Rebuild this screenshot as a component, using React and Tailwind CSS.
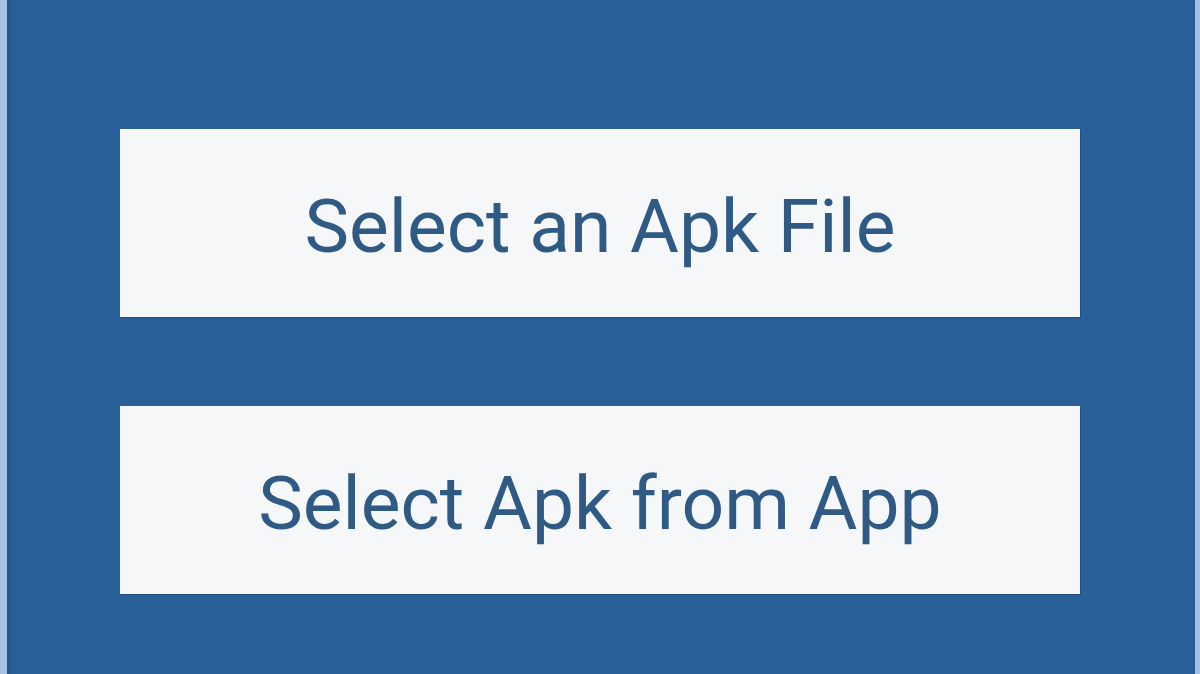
export default function App() {
  return (
    <div className="flex h-[674px] w-[1200px] overflow-hidden bg-[#2a6099]" style={{ fontFamily: "Roboto, 'Liberation Sans', sans-serif" }}>
      <div className="w-[7px] bg-[#a9c4e2]" />
      <div className="w-[4px] bg-[#23598f]" />
      <div className="flex flex-1 flex-col gap-[89px] pl-[109px] pr-[113px] pt-[129px]">
        <button className="h-[188px] w-full bg-[#f5f7f9] pt-[6px] text-[75px] leading-none text-[#2f5a83] shadow-[1px_1px_0_#1f4e7e]">
          Select an Apk File
        </button>
        <button className="h-[188px] w-full bg-[#f5f7f9] pt-[6px] text-[75px] leading-none text-[#2f5a83] shadow-[1px_1px_0_#1f4e7e]">
          Select Apk from App
        </button>
      </div>
      <div className="w-[2px] bg-[#275b92]" />
      <div className="w-[5px] bg-[#a3bfe2]" />
    </div>
  );
}
